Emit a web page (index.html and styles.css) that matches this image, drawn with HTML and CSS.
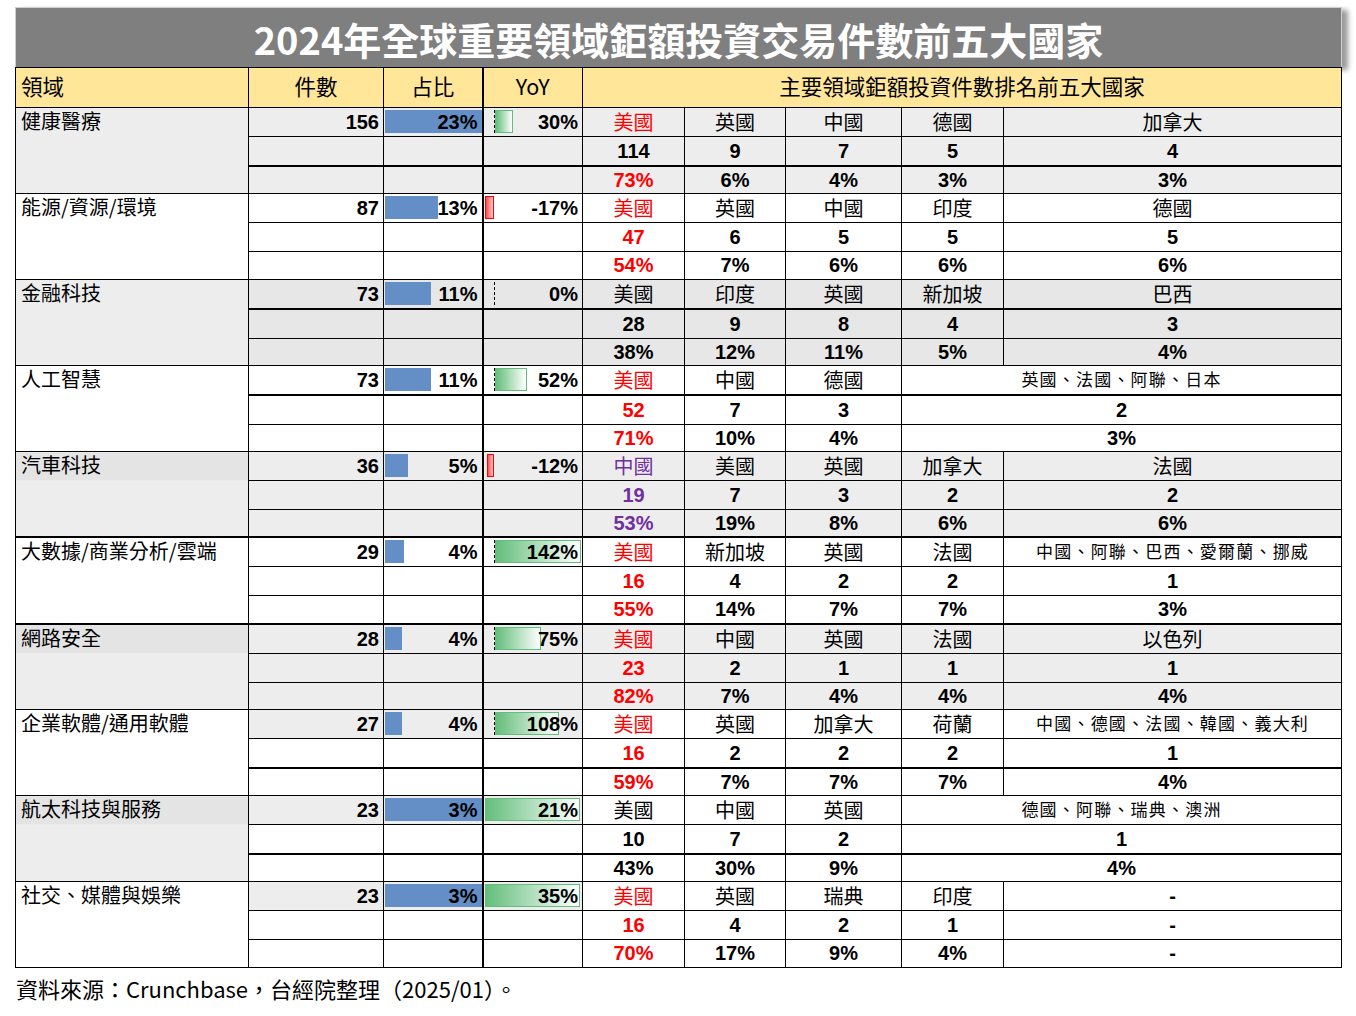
FILE: index.html
```html
<!DOCTYPE html>
<html lang="zh-Hant">
<head>
<meta charset="utf-8">
<title>2024年全球重要領域鉅額投資交易件數前五大國家</title>
<link rel="stylesheet" href="styles.css">
</head>
<body>
<div class="page">
  <div class="title">2024年全球重要領域鉅額投資交易件數前五大國家</div>
  <table class="grid">
    <colgroup>
      <col class="w-dom"><col class="w-num"><col class="w-share"><col class="w-yoy">
      <col class="w-c1"><col class="w-c2"><col class="w-c3"><col class="w-c4"><col class="w-c5">
    </colgroup>
    <thead>
      <tr class="head">
        <th class="h-left">領域</th><th>件數</th><th>占比</th><th>YoY</th>
        <th colspan="5">主要領域鉅額投資件數排名前五大國家</th>
      </tr>
    </thead>
    <tbody>
      <!-- 健康醫療 -->
      <tr class="ra gA">
        <td class="dom" rowspan="3">健康醫療</td>
        <td class="num">156</td>
        <td class="share"><div class="sbar" style="width:97px"></div><span>23%</span></td>
        <td class="yoy"><div class="axis"></div><div class="pos" style="width:18px"></div><span>30%</span></td>
        <td class="cn red">美國</td><td class="cn">英國</td><td class="cn">中國</td><td class="cn">德國</td><td class="cn">加拿大</td>
      </tr>
      <tr class="ra gA"><td></td><td></td><td></td><td class="n">114</td><td class="n">9</td><td class="n">7</td><td class="n">5</td><td class="n">4</td></tr>
      <tr class="rc gA tt"><td></td><td></td><td></td><td class="n red">73%</td><td class="n">6%</td><td class="n">4%</td><td class="n">3%</td><td class="n">3%</td></tr>

      <!-- 能源 -->
      <tr class="ra">
        <td class="dom" rowspan="3">能源/資源/環境</td>
        <td class="num">87</td>
        <td class="share"><div class="sbar" style="width:53px"></div><span>13%</span></td>
        <td class="yoy"><div class="neg" style="width:9px"></div><span>-17%</span></td>
        <td class="cn red">美國</td><td class="cn">英國</td><td class="cn">中國</td><td class="cn">印度</td><td class="cn">德國</td>
      </tr>
      <tr class="ra"><td></td><td></td><td></td><td class="n red">47</td><td class="n">6</td><td class="n">5</td><td class="n">5</td><td class="n">5</td></tr>
      <tr class="rc"><td></td><td></td><td></td><td class="n red">54%</td><td class="n">7%</td><td class="n">6%</td><td class="n">6%</td><td class="n">6%</td></tr>

      <!-- 金融科技 -->
      <tr class="ra gB">
        <td class="dom gA-cell" rowspan="3">金融科技</td>
        <td class="num">73</td>
        <td class="share"><div class="sbar" style="width:46px"></div><span>11%</span></td>
        <td class="yoy"><div class="axis"></div><span>0%</span></td>
        <td class="cn">美國</td><td class="cn">印度</td><td class="cn">英國</td><td class="cn">新加坡</td><td class="cn">巴西</td>
      </tr>
      <tr class="ra gB tt"><td></td><td></td><td></td><td class="n">28</td><td class="n">9</td><td class="n">8</td><td class="n">4</td><td class="n">3</td></tr>
      <tr class="rc gB"><td></td><td></td><td></td><td class="n">38%</td><td class="n">12%</td><td class="n">11%</td><td class="n">5%</td><td class="n">4%</td></tr>

      <!-- 人工智慧 -->
      <tr class="ra">
        <td class="dom" rowspan="3">人工智慧</td>
        <td class="num">73</td>
        <td class="share"><div class="sbar" style="width:46px"></div><span>11%</span></td>
        <td class="yoy"><div class="axis"></div><div class="pos" style="width:32px"></div><span>52%</span></td>
        <td class="cn red">美國</td><td class="cn">中國</td><td class="cn">德國</td><td class="cn sm" colspan="2">英國、法國、阿聯、日本</td>
      </tr>
      <tr class="ra tt"><td></td><td></td><td></td><td class="n red">52</td><td class="n">7</td><td class="n">3</td><td class="n" colspan="2">2</td></tr>
      <tr class="rc"><td></td><td></td><td></td><td class="n red">71%</td><td class="n">10%</td><td class="n">4%</td><td class="n" colspan="2">3%</td></tr>

      <!-- 汽車科技 -->
      <tr class="ra gA">
        <td class="dom hl" rowspan="3">汽車科技</td>
        <td class="num">36</td>
        <td class="share"><div class="sbar" style="width:23px"></div><span>5%</span></td>
        <td class="yoy"><div class="neg" style="width:7px"></div><span>-12%</span></td>
        <td class="cn purple">中國</td><td class="cn">美國</td><td class="cn">英國</td><td class="cn">加拿大</td><td class="cn">法國</td>
      </tr>
      <tr class="ra gA"><td></td><td></td><td></td><td class="n purple">19</td><td class="n">7</td><td class="n">3</td><td class="n">2</td><td class="n">2</td></tr>
      <tr class="rc gA"><td></td><td></td><td></td><td class="n purple">53%</td><td class="n">19%</td><td class="n">8%</td><td class="n">6%</td><td class="n">6%</td></tr>

      <!-- 大數據 -->
      <tr class="ra tt">
        <td class="dom" rowspan="3">大數據/商業分析/雲端</td>
        <td class="num">29</td>
        <td class="share"><div class="sbar" style="width:19px"></div><span>4%</span></td>
        <td class="yoy"><div class="axis"></div><div class="pos" style="width:86px"></div><span>142%</span></td>
        <td class="cn red">美國</td><td class="cn">新加坡</td><td class="cn">英國</td><td class="cn">法國</td><td class="cn sm">中國、阿聯、巴西、愛爾蘭、挪威</td>
      </tr>
      <tr class="ra"><td></td><td></td><td></td><td class="n red">16</td><td class="n">4</td><td class="n">2</td><td class="n">2</td><td class="n">1</td></tr>
      <tr class="rc"><td></td><td></td><td></td><td class="n red">55%</td><td class="n">14%</td><td class="n">7%</td><td class="n">7%</td><td class="n">3%</td></tr>

      <!-- 網路安全 -->
      <tr class="ra gA tt">
        <td class="dom hl" rowspan="3">網路安全</td>
        <td class="num">28</td>
        <td class="share"><div class="sbar" style="width:17px"></div><span>4%</span></td>
        <td class="yoy"><div class="axis"></div><div class="pos" style="width:46px"></div><span>75%</span></td>
        <td class="cn red">美國</td><td class="cn">中國</td><td class="cn">英國</td><td class="cn">法國</td><td class="cn">以色列</td>
      </tr>
      <tr class="ra gA"><td></td><td></td><td></td><td class="n red">23</td><td class="n">2</td><td class="n">1</td><td class="n">1</td><td class="n">1</td></tr>
      <tr class="rc gA"><td></td><td></td><td></td><td class="n red">82%</td><td class="n">7%</td><td class="n">4%</td><td class="n">4%</td><td class="n">4%</td></tr>

      <!-- 企業軟體 -->
      <tr class="ra">
        <td class="dom" rowspan="3">企業軟體/通用軟體</td>
        <td class="num g">27</td>
        <td class="share g"><div class="sbar" style="width:17px"></div><span>4%</span></td>
        <td class="yoy g"><div class="axis"></div><div class="pos" style="width:64px"></div><span>108%</span></td>
        <td class="cn red">美國</td><td class="cn">英國</td><td class="cn">加拿大</td><td class="cn">荷蘭</td><td class="cn sm">中國、德國、法國、韓國、義大利</td>
      </tr>
      <tr class="ra"><td></td><td></td><td></td><td class="n red">16</td><td class="n">2</td><td class="n">2</td><td class="n">2</td><td class="n">1</td></tr>
      <tr class="rc tt"><td></td><td></td><td></td><td class="n red">59%</td><td class="n">7%</td><td class="n">7%</td><td class="n">7%</td><td class="n">4%</td></tr>

      <!-- 航太 -->
      <tr class="ra">
        <td class="dom hl" rowspan="3">航太科技與服務</td>
        <td class="num g">23</td>
        <td class="share g"><div class="sbar full" style="width:97px"></div><span>3%</span></td>
        <td class="yoy g"><div class="pos full"></div><span>21%</span></td>
        <td class="cn">美國</td><td class="cn">中國</td><td class="cn">英國</td><td class="cn sm" colspan="2">德國、阿聯、瑞典、澳洲</td>
      </tr>
      <tr class="ra"><td></td><td></td><td></td><td class="n">10</td><td class="n">7</td><td class="n">2</td><td class="n" colspan="2">1</td></tr>
      <tr class="rc tt"><td></td><td></td><td></td><td class="n">43%</td><td class="n">30%</td><td class="n">9%</td><td class="n" colspan="2">4%</td></tr>

      <!-- 社交 -->
      <tr class="ra">
        <td class="dom" rowspan="3">社交、媒體與娛樂</td>
        <td class="num g">23</td>
        <td class="share g"><div class="sbar full" style="width:97px"></div><span>3%</span></td>
        <td class="yoy g"><div class="pos full"></div><span>35%</span></td>
        <td class="cn red">美國</td><td class="cn">英國</td><td class="cn">瑞典</td><td class="cn">印度</td><td class="n">-</td>
      </tr>
      <tr class="ra"><td></td><td></td><td></td><td class="n red">16</td><td class="n">4</td><td class="n">2</td><td class="n">1</td><td class="n">-</td></tr>
      <tr class="rc"><td></td><td></td><td></td><td class="n red">70%</td><td class="n">17%</td><td class="n">9%</td><td class="n">4%</td><td class="n">-</td></tr>
    </tbody>
  </table>
  <p class="source">資料來源：Crunchbase，台經院整理（2025/01）。</p>
</div>
</body>
</html>
```

FILE: styles.css
```css
html, body {
  margin: 0;
  padding: 0;
  background: #ffffff;
}

body {
  font-family: "Liberation Sans", "Noto Sans CJK TC", sans-serif;
  color: #000000;
}

.page {
  padding: 7px 0 0 15px;
  width: 1330px;
}

.title {
  width: 1325px;
  height: 59px;
  background: #7f7f7f;
  border: 1px solid #cfcfcf;
  border-bottom: 0;
  box-shadow: 6px 3px 5px rgba(0, 0, 0, 0.4);
  color: #ffffff;
  font-family: "Noto Sans CJK TC", sans-serif;
  font-weight: 700;
  font-size: 38px;
  line-height: 62px;
  text-align: center;
  white-space: nowrap;
  overflow: hidden;
}

.grid {
  border-collapse: collapse;
  table-layout: fixed;
  width: 1326px;
}

.w-dom { width: 233px; }
.w-num { width: 135px; }
.w-share { width: 99px; border-right: 2px solid #000; }
.w-yoy { width: 100px; }
.w-c1 { width: 102px; }
.w-c2 { width: 101px; }
.w-c3 { width: 116px; }
.w-c4 { width: 102px; }
.w-c5 { width: 338px; }

.grid th,
.grid td {
  border: 1px solid #000000;
  padding: 0 4px;
  white-space: nowrap;
}

.head th {
  height: 35px;
  background: #ffe699;
  font-family: "Noto Sans CJK TC", sans-serif;
  font-weight: 400;
  font-size: 21.5px;
  line-height: 28px;
  padding-bottom: 4px;
  text-align: center;
}

.head th.h-left {
  text-align: left;
  padding-left: 5px;
}

.grid td {
  font-size: 20px;
  line-height: 24px;
  position: relative;
}

tr.ra td { height: 28px; }
tr.rc td { height: 26.25px; }
tr.tt { border-top: 2px solid #000000; }

.dom {
  vertical-align: top;
  font-family: "Noto Sans CJK TC", sans-serif;
  font-size: 22px;
  line-height: 30px;
  text-align: left;
  padding-top: 1px !important;
  padding-left: 5px !important;
}

.num,
.share,
.yoy {
  text-align: right;
  font-weight: 700;
  overflow: hidden;
}

.share span,
.yoy span {
  position: relative;
}

.cn {
  text-align: center;
  font-family: "Noto Sans CJK TC", sans-serif;
  font-size: 21px;
}

.n {
  text-align: center;
  font-weight: 700;
}

.sm {
  font-size: 17px !important;
  letter-spacing: 1.2px;
  vertical-align: top;
  line-height: 25px !important;
}

.red { color: #ff0000; }
.purple { color: #7030a0; }

/* group fills */
.gA td { background: #ededed; }
.gB td { background: #e7e7e7; }
.gB td.gA-cell { background: #ededed; }
.grid td.hl { background: linear-gradient(#e4e4e4 0, #e4e4e4 28px, #ededed 28px); }
.grid td.g { background: #ededed; }

/* data bars */
.sbar {
  position: absolute;
  left: 1px;
  top: 2px;
  bottom: 3px;
  background: #638ec6;
}

.axis {
  position: absolute;
  left: 10px;
  top: 2px;
  bottom: 3px;
  border-left: 1px dashed #000000;
}

.pos {
  position: absolute;
  left: 11px;
  top: 2px;
  bottom: 3px;
  box-sizing: border-box;
  border: 1px solid #63be7b;
  background: linear-gradient(to right, #63be7b, #ffffff);
}

.pos.full {
  left: 1px;
  right: 2px;
}

.neg {
  position: absolute;
  right: calc(100% - 10px);
  top: 2px;
  bottom: 3px;
  box-sizing: border-box;
  border: 1px solid #ff0000;
  background: linear-gradient(to right, #ff4a4a, #ffd0d0);
}

.source {
  margin: 5px 0 0 1px;
  font-family: "Noto Sans CJK TC", sans-serif;
  font-size: 22px;
  line-height: 30px;
}
```
